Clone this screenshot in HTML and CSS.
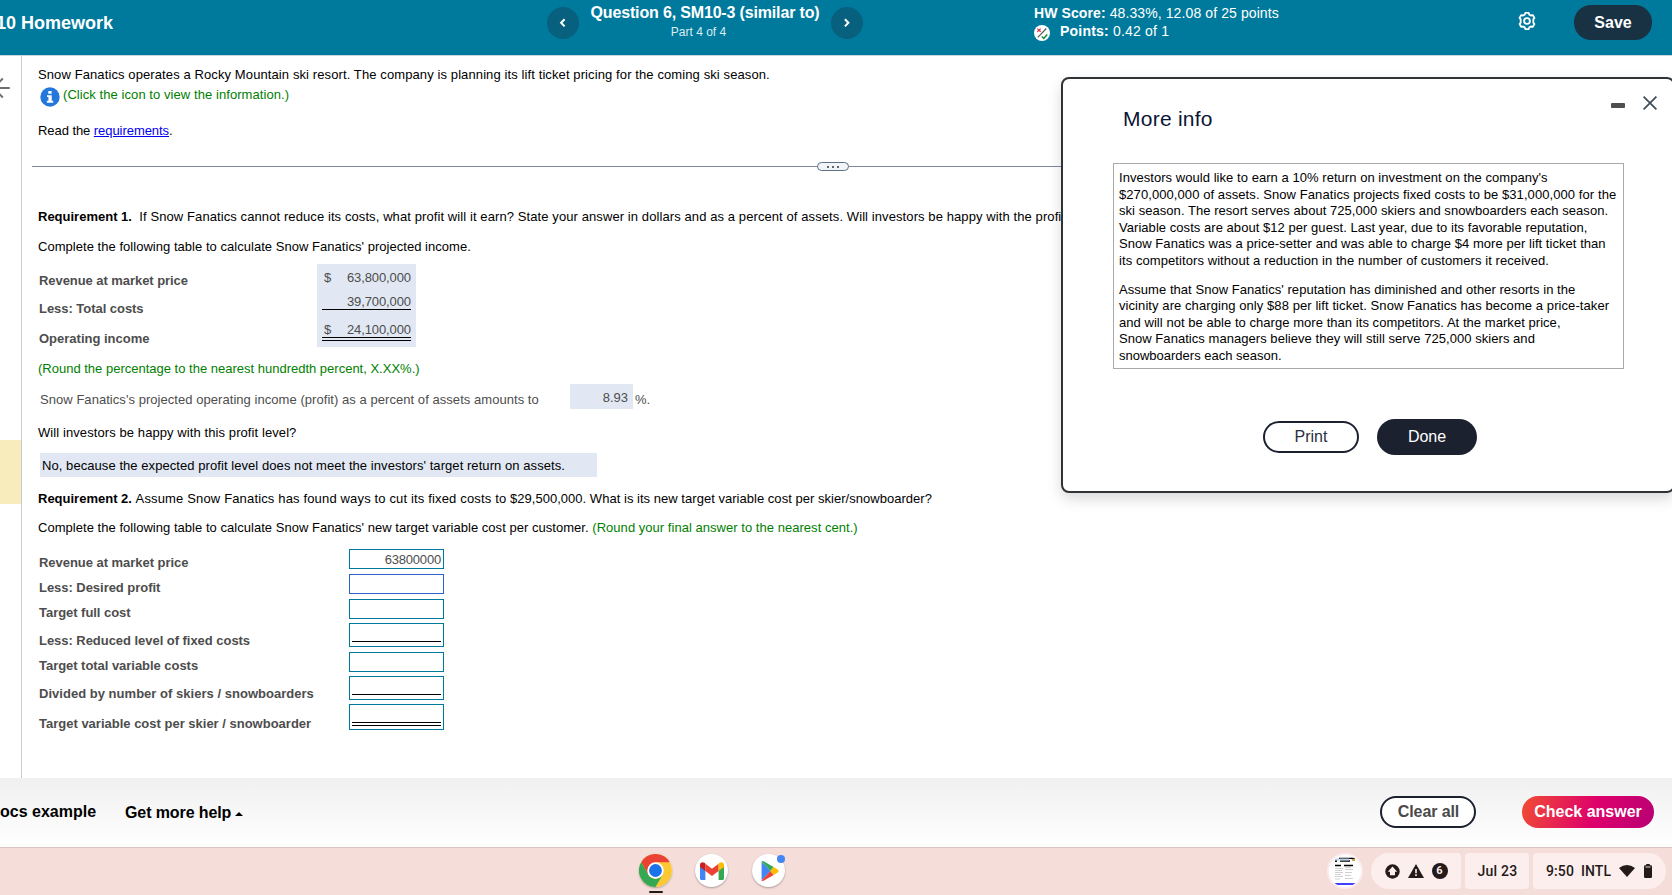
FILE: index.html
```html
<!DOCTYPE html>
<html lang="en">
<head>
<meta charset="utf-8">
<title>Homework</title>
<link rel="stylesheet" href="styles.css">
</head>
<body>
<div class="screen">
  <header class="topbar">
    <div class="course">10 Homework</div>
    <div class="qnav">
      <button class="round"><svg width="32" height="32" viewBox="0 0 32 32"><path d="M17.6 12.2 14.1 15.8l3.5 3.6" /></svg></button>
      <div class="qtitle"><div class="qname">Question 6, SM10-3 (similar to)</div><div class="qpart">Part 4 of 4</div></div>
      <button class="round"><svg width="32" height="32" viewBox="0 0 32 32"><path d="M13.9 12.2l3.5 3.6-3.5 3.6" /></svg></button>
    </div>
    <div class="score">
      <div class="hw"><b>HW Score:</b> 48.33%, 12.08 of 25 points</div>
      <div class="points">
        <svg width="16" height="16" viewBox="0 0 16 16"><circle cx="8" cy="8" r="8" fill="#fff"/><path d="M3.8 12.3 12.3 3.5" stroke="#555" stroke-width="1.1"/><path d="M3.3 3.6l3.4 3.2M6.7 3.6 3.3 6.8" stroke="#d8344a" stroke-width="1.2"/><path d="M7.8 11.5l2 2 3.4-4" stroke="#128a3c" stroke-width="1.5" fill="none"/></svg>
        <span><b>Points:</b> 0.42 of 1</span>
      </div>
    </div>
    <svg class="gear" width="20" height="20" viewBox="0 0 20 20" fill="none" stroke="#fff" stroke-width="1.8" stroke-linejoin="round"><path d="M8.4 1.9h3.2l.7 1.7 1.6.9 2-.3 1.5 2.7-1.1 1.5v3.2l1.1 1.5-1.5 2.7-2-.3-1.6.9-.7 1.7H8.400l-.7-1.700-1.600-.9-2 .3-1.500-2.700 1.100-1.500V8.400L2.600 6.900l1.500-2.700 2 .3 1.600-.9z"/><circle cx="10" cy="10" r="2.9"/></svg>
    <button class="save">Save</button>
  </header>

  <div class="main">
    <aside class="rail">
      <svg width="21" height="24" viewBox="0 0 21 24" fill="none" stroke="#6a6f73" stroke-width="1.9"><path d="M9.8 12H-5M2.8 2.5-6.5 12l9.3 9.5"/></svg>
      <div class="marker"></div>
    </aside>
    <section class="content">
      <p class="line s1">Snow Fanatics operates a Rocky Mountain ski resort. The company is planning its lift ticket pricing for the coming ski season.</p>
      <p class="line infoline"><svg width="20" height="20" viewBox="0 0 20 20"><circle cx="10" cy="10" r="9.7" fill="#2478dc"/><path d="M8.3 4h3.3v2.7H8.3zM7 8.2h4.700v5.600h1.500v1.900H6.900v-1.900h1.500v-3.700H7z" fill="#fff"/></svg><span class="green">(Click the icon to view the information.)</span></p>
      <p class="line read">Read the <a href="#">requirements</a>.</p>
      <div class="divider"><span class="grip"><i></i><i></i><i></i></span></div>
      <p class="line req1"><b>Requirement 1.</b>&nbsp; If Snow Fanatics cannot reduce its costs, what profit will it earn? State your answer in dollars and as a percent of assets. Will investors be happy with the profit level?</p>
      <p class="line complete">Complete the following table to calculate Snow Fanatics' projected income.</p>
      <div class="income">
        <div class="labels"><div class="l1">Revenue at market price</div><div class="l2">Less: Total costs</div><div class="l3">Operating income</div></div>
        <div class="values">
          <div class="v v1"><span>$</span><span>63,800,000</span></div>
          <div class="v v2"><span></span><span>39,700,000</span></div>
          <div class="v v3"><span>$</span><span>24,100,000</span></div>
        </div>
      </div>
      <p class="line green round-note">(Round the percentage to the nearest hundredth percent, X.XX%.)</p>
      <div class="percent"><span class="ptext">Snow Fanatics's projected operating income (profit) as a percent of assets amounts to</span><span class="pbox">8.93</span><span class="psign">%.</span></div>
      <p class="line will">Will investors be happy with this profit level?</p>
      <div class="choice">No, because the expected profit level does not meet the investors' target return on assets.</div>
      <p class="line req2"><b>Requirement 2.</b> <span class="wider">Assume Snow Fanatics has found ways to cut its fixed costs to</span> $29,500,000. What is its new target variable cost per skier/snowboarder?</p>
      <p class="line complete second">Complete the following table to calculate Snow Fanatics' new target variable cost per customer. <span class="green">(Round your final answer to the nearest cent.)</span></p>
      <div class="calc">
        <div class="row"><label>Revenue at market price</label><div class="field">63800000</div></div>
        <div class="row"><label>Less: Desired profit</label><div class="field focus"></div></div>
        <div class="row"><label>Target full cost</label><div class="field"></div></div>
        <div class="row tall"><label>Less: Reduced level of fixed costs</label><div class="field sum"><i></i></div></div>
        <div class="row"><label>Target total variable costs</label><div class="field"></div></div>
        <div class="row tall"><label class="wide">Divided by number of skiers / snowboarders</label><div class="field sum"><i></i></div></div>
        <div class="row last"><label class="plain">Target variable cost per skier / snowboarder</label><div class="field total"><i></i></div></div>
      </div>
    </section>
  </div>

  <footer class="footer">
    <span class="docs">ocs example</span>
    <span class="help">Get more help <i class="caret"></i></span>
    <button class="clear">Clear all</button>
    <button class="check">Check answer</button>
  </footer>

  <div class="shelf">
    <div class="apps">
      <div class="app active"><svg width="33" height="33" viewBox="0 0 48 48"><circle cx="24" cy="24" r="24" fill="#fcc934"/><path d="M24 12H44.8A24 24 0 0 0 3.2 12L13.6 30z" fill="#ea4335"/><path d="M13.6 30 3.2 12A24 24 0 0 0 24 48L34.4 30A12 12 0 0 1 13.6 30z" fill="#34a853"/><circle cx="24" cy="24" r="12" fill="#fff"/><circle cx="24" cy="24" r="9.3" fill="#1a73e8"/></svg></div>
      <div class="app"><svg width="24" height="18" viewBox="0 0 24 18"><path d="M0 2.5V16.4Q0 18 1.6 18H5.4V8z" fill="#4285f4"/><path d="M18.6 18h3.8Q24 18 24 16.4V2.5L18.6 7z" fill="#34a853"/><path d="M5.4 9V1.7L12 6.7l6.6-5V9L12 14z" fill="#ea4335"/><path d="M0 2.5V5l5.4 4V1.6L4.4.8C2.6-.6 0 .4 0 2.5z" fill="#c5221f"/><path d="M24 2.5V5l-5.4 4V1.6l1-.8C21.4-.6 24 .4 24 2.5z" fill="#fbbc04"/></svg></div>
      <div class="app play"><svg width="18" height="20" viewBox="0 0 18 20"><path d="M.6.6v18.8L9.5 10z" fill="#4285f4"/><path d="M.6.6Q1.4-.4 3 .5L12.6 6 9.5 10z" fill="#34a853"/><path d="M.6 19.4Q1.4 20.4 3 19.5L12.6 14 9.5 10z" fill="#ea4335"/><path d="M12.6 6l4 2.4q2.2 1.6 0 3.2l-4 2.4L9.3 10z" fill="#fbbc04"/></svg><span class="dot"></span></div>
    </div>
    <div class="tray">
      <div class="thumb"><svg width="20" height="28" viewBox="0 0 20 28"><path d="M0 0h20v28H0z" fill="#fff"/><path d="M4 1.3h13M5 4h10M0 8.5h6M9 8.5h9" stroke="#000" stroke-width="1.3"/><path d="M0 2.500h4.500M5 2.600h9" stroke="#b9cfe8" stroke-width="2"/><path d="M0 4.300h2M16.500 1.500H20" stroke="#111" stroke-width="1.4"/><path d="M17 3h3" stroke="#c8a64a" stroke-width="2"/><path d="M0 11.5h8M0 13.5h7M0 15.5h8M0 17.5h6M0 19.5h8M0 22h5M10 10.5h6M10 12.5h8M10 15.5h7M10 18.5h6M10 21.5h8" stroke="#c4c4c4" stroke-width=".8"/><path d="M0 27h20" stroke="#00f" stroke-width="1.3"/></svg></div>
      <div class="pill notes">
        <svg width="15" height="15" viewBox="0 0 15 15"><circle cx="7.5" cy="7.5" r="7.2" fill="#231a19"/><path d="M7.5 2.6 12.2 7.7H10V11.200H5V7.700H2.800z" fill="#fceeed"/></svg>
        <svg width="16" height="14" viewBox="0 0 16 14"><path d="M8 0l8 14H0z" fill="#231a19"/><path d="M7.2 5h1.6v4.2H7.200zM7.200 10.300h1.600v1.600H7.200z" fill="#fceeed"/></svg>
        <span class="count">6</span>
      </div>
      <div class="pill date">Jul 23</div>
      <div class="pill status"><span>9:50</span><span>INTL</span>
        <svg class="wifi" width="16" height="12" viewBox="0 0 16 12"><path d="M0 3Q8-2.8 16 3L8 12z" fill="#231a19"/></svg>
        <svg width="8" height="14" viewBox="0 0 8 14"><path d="M2.2 0h3.6v1.3h1Q8 1.3 8 2.500v10.300q0 1.200-1.200 1.200H1.200Q0 14 0 12.800V2.500q0-1.200 1.200-1.200h1z" fill="#231a19"/><path d="M1.500 3h5" stroke="#fceeed" stroke-width=".9"/></svg>
      </div>
    </div>
  </div>

  <div class="dialog">
    <div class="dhead"><h2>More info</h2><span class="min"></span><svg width="14" height="14" viewBox="0 0 14 14" stroke="#3e4a57" stroke-width="1.7"><path d="M.6.6l12.8 12.8M13.4.6.6 13.4"/></svg></div>
    <div class="dbody">
      <p>Investors would like to earn a 10% return on investment on the company's<br><span class="loose">$270,000,000 of assets. Snow Fanatics projects fixed costs to be $31,000,000 for the</span><br>ski season. The resort serves about 725,000 skiers and snowboarders each season.<br>Variable costs are about $12 per guest. Last year, due to its favorable reputation,<br>Snow Fanatics was a price-setter and was able to charge $4 more per lift ticket than<br><span class="loose">its competitors without a reduction in the number of customers it received.</span></p>
      <p>Assume that Snow Fanatics' reputation has diminished and other resorts in the<br><span class="loose">vicinity are charging only $88 per lift ticket. Snow Fanatics has become a price-taker</span><br>and will not be able to charge more than its competitors. At the market price,<br>Snow Fanatics managers believe they will still serve 725,000 skiers and<br><span class="even">snowboarders each season.</span></p>
    </div>
    <div class="dfoot"><button class="print">Print</button><button class="done">Done</button></div>
  </div>
</div>
</body>
</html>
```
FILE: styles.css
```css
* { box-sizing: border-box; }
body { margin: 0; background: #fff; font-family: "Liberation Sans", Arial, sans-serif; }
button { font-family: inherit; border: 0; padding: 0; margin: 0; white-space: nowrap; }
svg { display: block; flex: none; }
p { margin: 0; }

.screen { position: relative; width: 1672px; height: 895px; overflow: hidden; display: flex; flex-direction: column; }

/* top bar */
.topbar { height: 56px; flex: none; background: #007a9c; border-bottom: 1px solid #c5d6de; color: #fff; display: flex; align-items: flex-start; }
.course { width: 551px; margin: 12px 0 0 -4px; font-size: 18px; line-height: 22px; font-weight: 700; white-space: nowrap; }
.qnav { display: flex; width: 316px; }
.round { width: 32px; height: 32px; margin-top: 7px; border-radius: 50%; background: #08607f; flex: none; }
.round svg { fill: none; stroke: #fff; stroke-width: 2; }
.qtitle { flex: 1; text-align: center; }
.qname { margin-top: 3px; font-size: 16px; line-height: 19px; font-weight: 700; letter-spacing: -.16px; white-space: nowrap; }
.qpart { margin: 3px 13px 0 0; font-size: 12px; line-height: 14px; color: #d9edf3; }
.score { margin-left: 171px; width: 484px; font-size: 14px; line-height: 18px; letter-spacing: .2px; }
.hw { margin-top: 4px; letter-spacing: .1px; }
.points { display: flex; gap: 10px; }
.points svg { margin-top: 3px; }
.gear { margin-top: 11px; margin-right: 37px; margin-left: -1px; }
.save { width: 78px; height: 35px; margin-top: 5px; border-radius: 17px; background: #183244; color: #fff; font-size: 16px; font-weight: 700; }

/* question area */
.main { height: 722px; flex: none; display: flex; }
.rail { width: 22px; flex: none; border-right: 1px solid #c7cdd6; padding-top: 20px; }
.marker { height: 64px; margin-top: 340px; background: #f8ebbc; }
.content { flex: 1; min-width: 0; padding: 9px 0 0 16px; font-size: 13px; color: #000; }
.line { height: 20px; line-height: 20px; white-space: nowrap; }
.green { color: #008000; }
.s1 { letter-spacing: .104px; }
.infoline { display: flex; padding-left: 2px; letter-spacing: .07px; }
.infoline svg { margin: 2px 3px 0 0; }
.read { margin-top: 16px; letter-spacing: -.06px; }
.read a { color: #00e; }
.divider { height: 10px; margin: 21px 0 0 -6px; position: relative; display: flex; align-items: center; background: linear-gradient(#7f86a0, #7f86a0) 0 4px / 100% 1px no-repeat; }
.grip { width: 32px; height: 9px; margin: -1px 0 0 785px; border: 1px solid #5c7084; border-radius: 5px; background: #f2f5f8; display: flex; align-items: center; justify-content: center; gap: 3px; }
.grip i { width: 2px; height: 2px; background: #5c6670; }
.req1 { margin-top: 35px; letter-spacing: .093px; }
.req1 b, .req2 b { letter-spacing: 0; }
.complete { margin-top: 10px; letter-spacing: .035px; }

.income { display: flex; height: 83px; margin: 7px 0 0 1px; color: #4d4d4d; line-height: 20px; }
.labels { width: 278px; font-weight: 700; padding-top: 7px; }
.l1 { letter-spacing: -.06px; }
.l2 { margin-top: 8px; letter-spacing: -.04px; }
.l3 { margin-top: 10px; }
.values { width: 99px; padding: 4px 5px 0; background: #e1e8f3; letter-spacing: -.1px; }
.v { display: flex; justify-content: space-between; padding-left: 2px; height: 20px; }
.v2 { margin-top: 4px; height: 18px; border-bottom: 1px solid #000; }
.v3 { margin-top: 10px; height: 21px; border-bottom: 4px double #000; }
.round-note { margin-top: 12px; }
.percent { display: flex; height: 25px; margin: 5px 0 0 2px; color: #4d4d4d; line-height: 20px; white-space: nowrap; }
.ptext { width: 530px; padding-top: 6px; letter-spacing: .05px; }
.pbox { width: 63px; padding: 4px 5px 0 0; text-align: right; background: #e1e8f3; }
.psign { padding: 6px 0 0 2px; }
.will { margin-top: 14px; letter-spacing: .087px; }
.choice { width: 557px; height: 24px; margin: 10px 0 0 2px; padding: 3px 0 0 2px; line-height: 20px; letter-spacing: .065px; background: #e1e8f3; white-space: nowrap; }
.req2 { margin-top: 12px; letter-spacing: .03px; }
.wider { letter-spacing: .155px; }
.complete.second { margin-top: 9px; }

.calc { display: flex; flex-direction: column; margin: 11px 0 0 1px; color: #4d4d4d; }
.row { display: flex; height: 20px; margin-bottom: 5px; line-height: 20px; }
.row label { width: 310px; flex: none; padding-top: 4px; font-weight: 700; white-space: nowrap; letter-spacing: -.04px; }
.row.tall { height: 24px; margin-top: -1px; }
.row.tall label { padding-top: 8px; }
.row.last { height: 26px; margin-top: -1px; }
.row.last label { padding-top: 10px; }
.row .wide { letter-spacing: .025px; }
.row .plain { letter-spacing: 0; }
.field { width: 95px; border: 1px solid #007a9c; text-align: right; padding: 0 2px; line-height: 20px; letter-spacing: -.19px; }
.field.focus { border-color: #2b62cc; }
.field i { display: block; border-bottom: 1px solid #000; height: 18px; }
.field.total i { border-bottom: 4px double #000; height: 21px; }

/* footer */
.footer { height: 70px; flex: none; display: flex; background: linear-gradient(#f0f0f0, #fff); border-bottom: 1px solid #d8c5c4; font-size: 16px; font-weight: 700; line-height: 20px; }
.docs { width: 125px; padding-top: 24px; white-space: nowrap; }
.help { width: 1255px; padding-top: 25px; display: flex; gap: 4px; letter-spacing: -.1px; }
.caret { width: 0; height: 0; margin-top: 9px; border: 4px solid transparent; border-top: 0; border-bottom-color: #000; }
.clear { width: 96px; height: 32px; margin-top: 18px; padding-left: 1px; border: 2px solid #1c2130; border-radius: 16px; background: #fff; color: #4a4a4a; font-size: 16px; font-weight: 700; letter-spacing: -.1px; }
.check { width: 132px; height: 32px; margin: 18px 0 0 46px; border-radius: 16px; background: linear-gradient(105deg, #ef4638 5%, #de006b 55%, #b80075); color: #fff; font-size: 16px; font-weight: 700; }

/* system shelf */
.shelf { height: 47px; flex: none; background: #f5ddda; display: flex; justify-content: space-between; }
.apps { display: flex; gap: 23px; padding: 6px 0 0 639px; }
.app { position: relative; width: 33px; height: 33px; border-radius: 50%; background: #fff; display: flex; align-items: center; justify-content: center; box-shadow: 0 1px 2px rgba(0,0,0,.3); }
.play { margin-left: 1px; }
.play svg { margin-left: 3px; }
.app.active::after { content: ""; position: absolute; left: 10px; top: 37px; width: 14px; height: 2px; background: #231a19; border-radius: 1px; }
.dot { position: absolute; right: 0; top: 1px; width: 8px; height: 8px; border-radius: 50%; background: #4285f4; }
.tray { display: flex; padding: 5px 6px 0 0; font: 500 14px/36px Roboto, sans-serif; color: #231a19; }
.thumb { width: 36px; height: 36px; margin-right: 8px; border-radius: 50%; background: #fff; border: 2px solid #fceeed; display: flex; align-items: center; justify-content: center; overflow: hidden; }
.pill { height: 36px; background: #fceeed; border-radius: 4px; display: flex; align-items: center; justify-content: center; margin-right: 4px; }
.notes { width: 90px; border-radius: 18px 4px 4px 18px; gap: 8px; }
.count { width: 16px; height: 16px; border-radius: 50%; background: #231a19; color: #fceeed; font-size: 11px; font-weight: 700; line-height: 16px; text-align: center; }
.date { width: 64px; padding-left: 1px; letter-spacing: .25px; }
.status { width: 133px; margin-right: 0; border-radius: 4px 18px 18px 4px; gap: 7px; justify-content: flex-start; padding-left: 13px; letter-spacing: .1px; }
.wifi { margin: 0 2px 0 1px; }

/* information window */
.dialog { position: absolute; left: 1061px; top: 77px; width: 614px; height: 416px; background: #fff; border: 2px solid #2f3336; border-radius: 8px; box-shadow: 0 6px 14px rgba(0,0,0,.15); }
.dhead { display: flex; height: 84px; padding-left: 60px; }
.dhead h2 { width: 488px; margin: 28px 0 0; font-size: 21px; line-height: 24px; font-weight: 400; color: #0b1535; letter-spacing: .25px; }
.min { width: 14px; height: 5px; margin: 24px 18px 0 0; background: #4f4f4f; border-radius: 1px; }
.dhead svg { margin-top: 17px; }
.dbody { width: 511px; height: 206px; margin-left: 50px; border: 1px solid #aaa; padding: 6px 0 0 5px; font-size: 13px; line-height: 16.6px; letter-spacing: .047px; white-space: nowrap; }
.dbody p + p { margin-top: 12px; }
.loose { letter-spacing: .078px; }
.even { letter-spacing: 0; }
.dfoot { display: flex; align-items: center; gap: 18px; margin: 50px 0 0 200px; }
.print { width: 96px; height: 32px; border: 2px solid #1c2130; border-radius: 16px; background: #fff; color: #2b3040; font-size: 16px; }
.done { width: 100px; height: 36px; border-radius: 18px; background: #1c2130; color: #fff; font-size: 16px; }
```
